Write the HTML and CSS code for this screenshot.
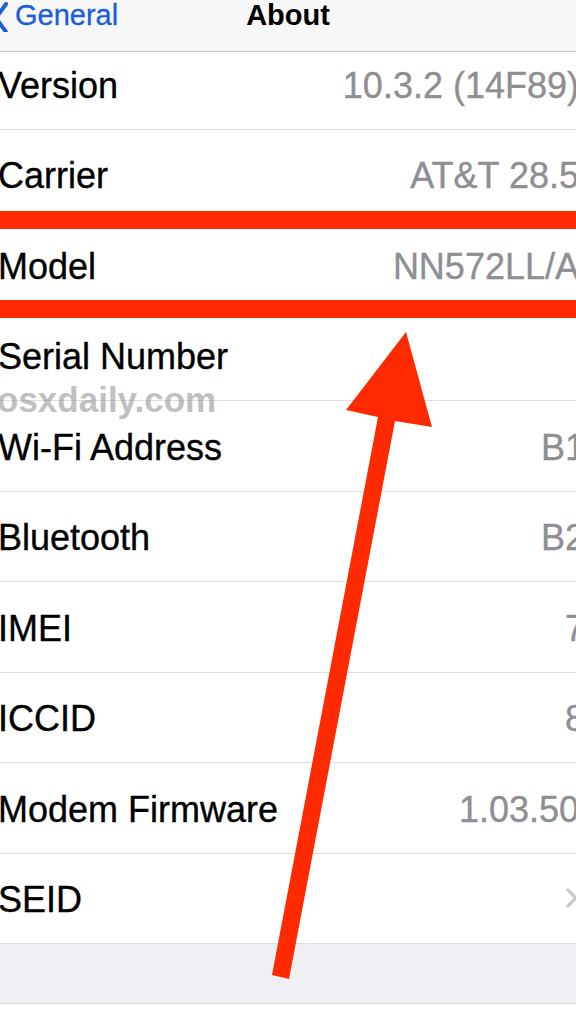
FILE: index.html
```html
<!DOCTYPE html>
<html>
<head>
<meta charset="utf-8">
<link rel="stylesheet" href="styles.css">
</head>
<body>
<div class="screen">
  <header class="nav">
    <div class="nav-back">
      <svg class="chev" width="10" height="32" viewBox="0 0 10 32"><path d="M6 4 L-4 18 L6 32" fill="none" stroke="#1b5ed8" stroke-width="4" stroke-linejoin="round" stroke-linecap="round"/></svg>
      <span>General</span>
    </div>
    <div class="nav-title">About</div>
  </header>
  <main class="list">
    <div class="row first"><span class="label">Version</span><span class="value">10.3.2 (14F89)</span></div>
    <div class="row"><span class="label">Carrier</span><span class="value">AT&amp;T 28.5</span></div>
    <div class="row"><span class="label">Model</span><span class="value">NN572LL/A</span></div>
    <div class="row"><span class="label">Serial Number</span><span class="value"></span></div>
    <div class="row"><span class="label">Wi-Fi Address</span><span class="value cut">B1</span></div>
    <div class="row"><span class="label">Bluetooth</span><span class="value cut">B2</span></div>
    <div class="row"><span class="label">IMEI</span><span class="value cut">7</span></div>
    <div class="row"><span class="label">ICCID</span><span class="value cut">8</span></div>
    <div class="row"><span class="label">Modem Firmware</span><span class="value">1.03.50</span></div>
    <div class="row"><span class="label">SEID</span><span class="disclosure"></span></div>
    <div class="group-gap"></div>
    <div class="tail"></div>
  </main>
  <div class="highlight"></div>
  <div class="watermark">osxdaily.com</div>
  <svg class="arrow" width="576" height="1024" viewBox="0 0 576 1024">
    <polygon points="406,332 432,427 395,421 289,979 272,975 378,417 346,410" fill="#ff2a00"/>
  </svg>
</div>
</body>
</html>
```

FILE: styles.css
```css
* { box-sizing: border-box; }
html, body { margin: 0; padding: 0; }
body {
  width: 576px;
  height: 1024px;
  overflow: hidden;
  background: #ffffff;
  font-family: "Liberation Sans", Arial, sans-serif;
}
.screen {
  position: relative;
  width: 576px;
  height: 1024px;
  overflow: hidden;
}
.nav {
  position: relative;
  z-index: 1;
  height: 52px;
  background: rgba(247, 247, 247, 0.97);
  border-bottom: 1px solid #c9c9cc;
  display: flex;
  align-items: flex-start;
}
.nav-back {
  display: flex;
  align-items: flex-start;
  color: #1b5ed8;
  font-size: 29px;
  -webkit-text-stroke: 0.3px #1b5ed8;
}
.nav-back .chev { display: block; }
.nav-back span { margin-left: 5px; margin-top: -1px; }
.nav-title {
  position: absolute;
  left: 0;
  right: 0;
  top: -1px;
  text-align: center;
  font-weight: bold;
  font-size: 29px;
  color: #000;
}
.list {
  margin-top: -13px;
}
.row {
  height: 90.5px;
  border-bottom: 1px solid #dedee0;
  display: flex;
  align-items: center;
  justify-content: space-between;
  padding-top: 4px;
  font-size: 36px;
  white-space: nowrap;
}
.label {
  color: #000;
  margin-left: -2px;
  -webkit-text-stroke: 0.35px #000;
}
.value {
  color: #8e8e93;
  margin-right: -3px;
  -webkit-text-stroke: 0.35px #8e8e93;
}
.value.cut { margin-right: -9px; }
.disclosure {
  width: 14px;
  height: 14px;
  border-top: 3px solid #c7c7cc;
  border-right: 3px solid #c7c7cc;
  transform: rotate(45deg);
  margin-right: 1px;
  margin-top: -4px;
}
.group-gap {
  height: 60px;
  background: #efeff4;
  border-bottom: 1px solid #d6d6da;
}
.tail {
  height: 40px;
  background: #fff;
}
.highlight {
  position: absolute;
  left: -20px;
  right: -20px;
  top: 211px;
  height: 107px;
  border-top: 18px solid #ff2a00;
  border-bottom: 18px solid #ff2a00;
}
.watermark {
  position: absolute;
  left: -3px;
  top: 380px;
  font-size: 35px;
  font-weight: bold;
  color: rgba(150, 150, 150, 0.6);
  white-space: nowrap;
}
.arrow {
  position: absolute;
  left: 0;
  top: 0;
}
```
